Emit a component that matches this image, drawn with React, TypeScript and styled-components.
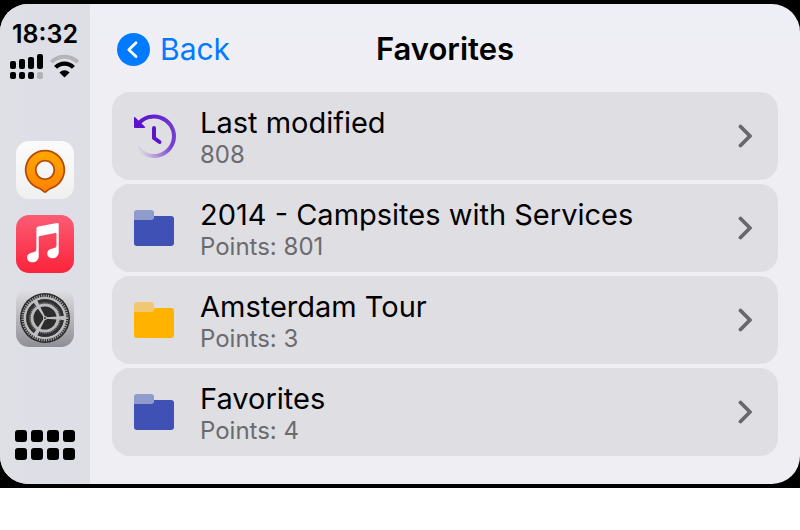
import React from "react";
import styled, { createGlobalStyle } from "styled-components";

const GlobalStyle = createGlobalStyle`
  * { box-sizing: border-box; }
  body { margin: 0; background: #fff; font-family: Inter, "Liberation Sans", sans-serif; color: #000; }
  button { font: inherit; color: inherit; border: 0; padding: 0; background: none; cursor: pointer; }
  svg { display: block; flex: none; }
`;

const Bezel = styled.div`
  background: #000;
  padding: 4px 0;
`;

const Screen = styled.div`
  display: flex;
  overflow: hidden;
  border-radius: 28px;
  background: linear-gradient(180deg, #eeeff6, #efeef3 90px);
`;

const Sidebar = styled.nav`
  width: 90px;
  flex: none;
  display: flex;
  flex-direction: column;
  align-items: center;
  padding: 15px 0 24px;
  background: linear-gradient(90deg, #dfe0e5, #dedee7 50%, #dedfe5);
`;

const Clock = styled.time`
  font-size: 25px;
  line-height: 30px;
  font-weight: 600;
`;

const StatusRow = styled.div`
  display: flex;
  gap: 7px;
  margin-top: 5px;
`;

const Apps = styled.div`
  display: flex;
  flex-direction: column;
  gap: 16px;
  margin: 62px 0 auto;
`;

const AppButton = styled.button`
  width: 58px;
  height: 58px;
  border-radius: 13px;
  overflow: hidden;
`;

const Main = styled.main`
  flex: 1;
  min-width: 0;
  padding: 20px 22px 28px;
`;

const Header = styled.header`
  display: grid;
  grid-template-columns: 1fr auto 1fr;
  align-items: center;
  height: 50px;
  margin-bottom: 18px;
  padding: 0 5px;
`;

const Back = styled.button`
  display: flex;
  align-items: center;
  justify-self: start;
  gap: 10px;
  font-size: 30px;
  line-height: 40px;
  color: #007aff;
`;

const Title = styled.h1`
  margin: 0;
  font-size: 31px;
  line-height: 40px;
  font-weight: 600;
`;

const List = styled.ul`
  list-style: none;
  margin: 0;
  padding: 0;
  display: grid;
  gap: 4px;
`;

const Row = styled.button`
  width: 100%;
  height: 88px;
  display: flex;
  align-items: center;
  gap: 24px;
  padding: 0 24px 0 20px;
  border-radius: 18px;
  background: #dfdee3;
  text-align: left;
`;

const RowText = styled.span`
  flex: 1;
  min-width: 0;
  display: flex;
  flex-direction: column;
  padding-top: 2px;
`;

const RowTitle = styled.span`
  font-size: 29px;
  line-height: 36px;
`;

const RowDetail = styled.span`
  font-size: 24px;
  line-height: 28px;
  color: #6b6b6f;
`;

const SignalIcon = () => (
  <svg width="33" height="25" viewBox="0 0 33 25" aria-label="Signal">
    <rect x="0" y="7" width="6" height="8" rx="2" />
    <rect x="9" y="5" width="6" height="10" rx="2" />
    <rect x="18" y="3" width="6" height="12" rx="2" />
    <rect x="27" y="0" width="6" height="15" rx="2" />
    <rect x="0" y="18" width="6" height="7" rx="2" />
    <rect x="9" y="18" width="6" height="7" rx="2" />
    <rect x="18" y="18" width="6" height="7" rx="2" />
    <rect x="27" y="18" width="6" height="7" rx="2" fill="#b3b3b8" />
  </svg>
);

const WifiIcon = () => (
  <svg width="30" height="25" viewBox="0 0 30 25" aria-label="Wi-Fi">
    <path d="M1.2 8.2A19 19 0 0 1 27.8 8.2" fill="none" stroke="#b3b3b8" strokeWidth="3.8" />
    <path d="M5.6 13.4A12.2 12.2 0 0 1 23.4 13.4" fill="none" stroke="#000" strokeWidth="4.2" />
    <path d="M9.4 18.6Q14.5 14 19.6 18.6L14.5 23.4Z" />
  </svg>
);

const MapsIcon = () => (
  <svg width="58" height="58" viewBox="0 0 58 58">
    <defs>
      <linearGradient id="pin" x1="0" y1="0" x2="0" y2="1">
        <stop offset="0" stopColor="#ffa800" />
        <stop offset="1" stopColor="#ff8200" />
      </linearGradient>
      <linearGradient id="paper" x1="0" y1="0" x2="0" y2="1">
        <stop offset="0" stopColor="#fbfbfb" />
        <stop offset="1" stopColor="#f0f0f1" />
      </linearGradient>
    </defs>
    <rect width="58" height="58" fill="url(#paper)" />
    <path
      fillRule="evenodd"
      d="M29 9.7A19.2 19.2 0 0 1 37.6 46.1C33 47.6 31.5 49 29.9 50.7Q29 51.6 28.1 50.7C26.5 49 25 47.6 20.4 46.1A19.2 19.2 0 0 1 29 9.7ZM29 19.7A9.3 9.3 0 1 0 29 38.3A9.3 9.3 0 1 0 29 19.7Z"
      fill="url(#pin)"
      stroke="#b54a08"
      strokeWidth="1.8"
      strokeLinejoin="round"
    />
  </svg>
);

const MusicIcon = () => (
  <svg width="58" height="58" viewBox="0 0 58 58">
    <defs>
      <linearGradient id="music" x1="0" y1="0" x2="0" y2="1">
        <stop offset="0" stopColor="#fc5c74" />
        <stop offset="1" stopColor="#fa233b" />
      </linearGradient>
    </defs>
    <rect width="58" height="58" fill="url(#music)" />
    <path
      d="M22.2 11.4L41.2 7.9Q42.7 7.7 42.7 9.2V37C42.7 41 39.8 43.3 36.5 43.3C33.2 43.3 31.2 41.2 31.2 38.5C31.2 36 33 34.2 35.6 33.7L38.2 33.1Q40.5 32.6 40.5 30.5V18.7Q40.5 17.7 39.4 17.9L23.8 20.9Q22.7 21.1 22.7 22.2V40.9C22.7 44.9 19.8 47.3 16.5 47.3C13.2 47.3 11.1 45.2 11.1 42.5C11.1 40 13 38.2 15.5 37.7L18.1 37.1Q20.4 36.6 20.4 34.5V13.6Q20.4 11.8 22.2 11.4Z"
      fill="#fff"
    />
  </svg>
);

const SettingsIcon = () => (
  <svg width="58" height="58" viewBox="0 0 58 58">
    <defs>
      <linearGradient id="metal" x1="0" y1="0" x2="0" y2="1">
        <stop offset="0" stopColor="#e0e0e4" />
        <stop offset="1" stopColor="#8e8e94" />
      </linearGradient>
    </defs>
    <rect width="58" height="58" fill="url(#metal)" />
    <g transform="translate(29 29)" fill="none">
      <circle r="25" fill="#2c2c2d" />
      <circle r="22.2" stroke="#a8a8aa" strokeWidth="2.6" strokeDasharray="1.1 1.225" />
      <circle r="20" stroke="#bcbcbe" strokeWidth="2.6" />
      <circle r="17" stroke="#303031" strokeWidth="3.6" />
      <circle r="15.2" stroke="#77777a" strokeWidth="1.6" strokeDasharray="1 .99" />
      <circle r="13" stroke="#b9b9bb" strokeWidth="3" />
      {[0, 120, 240].map((angle) => (
        <path key={angle} d="M1 -.8L13 -1.5L20 -2.3V2.3L13 1.5L1 .8Z" fill="#bfbfc1" transform={`rotate(${angle})`} />
      ))}
      <circle r="2.1" fill="#bfbfc1" />
      <circle r="1" fill="#2c2c2d" />
    </g>
  </svg>
);

const GridIcon = () => (
  <svg width="60" height="30" viewBox="0 0 60 30">
    {[0, 18].map((y) => [0, 16, 32, 48].map((x) => <rect key={`${x}-${y}`} x={x} y={y} width="12" height="12" rx="3" />))}
  </svg>
);

const BackIcon = () => (
  <svg width="33" height="33" viewBox="0 0 33 33">
    <circle cx="16.5" cy="16.5" r="16.5" fill="#007aff" />
    <path d="M19 9.8L11.8 16.7L19 23.6" fill="none" stroke="#fff" strokeWidth="2.8" strokeLinecap="round" strokeLinejoin="round" />
  </svg>
);

const HistoryIcon = () => (
  <svg width="44" height="44" viewBox="0 0 44 44">
    <defs>
      <linearGradient id="fade" gradientUnits="userSpaceOnUse" x1="34" y1="20" x2="5" y2="34">
        <stop offset="0" stopColor="#5a14cc" stopOpacity=".8" />
        <stop offset="1" stopColor="#5a14cc" stopOpacity="0" />
      </linearGradient>
      <linearGradient id="arc" gradientUnits="userSpaceOnUse" x1="5" y1="4" x2="42" y2="22">
        <stop offset="0" stopColor="#5a14cc" />
        <stop offset="1" stopColor="#5a14cc" stopOpacity=".8" />
      </linearGradient>
    </defs>
    <path d="M6.5 9.8A20 20 0 0 1 42 22" fill="none" stroke="url(#arc)" strokeWidth="4" />
    <path d="M42 22A20 20 0 0 1 4.4 31.5" fill="none" stroke="url(#fade)" strokeWidth="4" />
    <path d="M2 3.2Q2.8 2.8 3.4 3.4L12.9 12.8Q13.5 14 12.2 14H3Q2 14 2 13Z" fill="#5a14cc" />
    <path d="M22 14V24L27.5 28" fill="none" stroke="#5a14cc" strokeWidth="4" strokeLinecap="round" strokeLinejoin="round" />
  </svg>
);

const FolderIcon = ({ color, tab }: { color: string; tab: string }) => (
  <svg width="44" height="36" viewBox="0 0 44 36">
    <path d="M2 8H22V6H39Q42 6 42 9V33Q42 36 39 36H5Q2 36 2 33Z" fill={color} />
    <path d="M5 0H19Q22 0 22 3V7Q22 10 19 10H2V3Q2 0 5 0Z" fill={tab} />
  </svg>
);

const Chevron = () => (
  <svg width="16" height="24" viewBox="0 0 16 24">
    <path d="M2.5 2.5L12 12L2.5 21.5" fill="none" stroke="#68686b" strokeWidth="3.8" strokeLinecap="round" strokeLinejoin="round" />
  </svg>
);

const blueFolder = <FolderIcon color="#3f51b5" tab="#909bcd" />;

const rows = [
  { title: "Last modified", detail: "808", icon: <HistoryIcon /> },
  { title: "2014 - Campsites with Services", detail: "Points: 801", icon: blueFolder },
  { title: "Amsterdam Tour", detail: "Points: 3", icon: <FolderIcon color="#ffb300" tab="#f0c873" /> },
  { title: "Favorites", detail: "Points: 4", icon: blueFolder },
];

export default function App() {
  return (
    <>
      <GlobalStyle />
      <Bezel>
        <Screen>
          <Sidebar>
            <Clock>18:32</Clock>
            <StatusRow>
              <SignalIcon />
              <WifiIcon />
            </StatusRow>
            <Apps>
              <AppButton aria-label="Maps"><MapsIcon /></AppButton>
              <AppButton aria-label="Music"><MusicIcon /></AppButton>
              <AppButton aria-label="Settings"><SettingsIcon /></AppButton>
            </Apps>
            <button aria-label="All apps"><GridIcon /></button>
          </Sidebar>
          <Main>
            <Header>
              <Back><BackIcon />Back</Back>
              <Title>Favorites</Title>
            </Header>
            <List>
              {rows.map((row) => (
                <li key={row.title}>
                  <Row>
                    {row.icon}
                    <RowText>
                      <RowTitle>{row.title}</RowTitle>
                      <RowDetail>{row.detail}</RowDetail>
                    </RowText>
                    <Chevron />
                  </Row>
                </li>
              ))}
            </List>
          </Main>
        </Screen>
      </Bezel>
    </>
  );
}
